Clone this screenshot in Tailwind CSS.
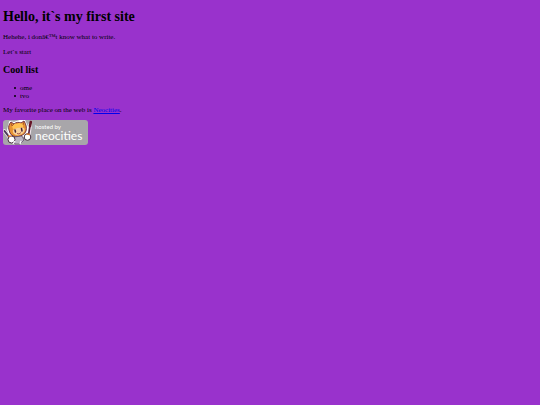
<!DOCTYPE html>
<html lang="en">
<head>
    <meta charset="UTF-8">
    <meta name="viewport" content="width=device-width, initial-scale=1.0">
    <title>My first site</title>
    <script src="https://cdn.jsdelivr.net/npm/@tailwindcss/browser@4"></script>
</head>

<body class="bg-[#9932cc] min-h-screen px-[3px] pt-[9px] text-black text-[7px] leading-[8px] font-['Liberation_Serif',serif]">
    <h1 class="text-[14px] leading-[15px] font-bold mb-[9px]">Hello, it`s my first site</h1>
    <p class="mb-[7px]">Hehehe, i donâ€™t know what to write.</p>
    <p class="mb-[8px]">Let`s start</p>

    <h2 class="text-[10px] leading-[12px] font-bold mb-[8px]">Cool list</h2>
    <ul class="pl-[11px] mb-[6px]">
        <li class="flex items-center gap-[4px] before:size-[2px] before:rounded-full before:bg-black">ome</li>
        <li class="flex items-center gap-[4px] before:size-[2px] before:rounded-full before:bg-black">tvo</li>
    </ul>

    <p class="mb-[6px]">My favorite place on the web is <a href="https://neocities.org" class="text-[#0000ee] underline">Neocities</a>.</p>

    <!-- Hosting badge -->
    <a href="https://neocities.org" aria-label="Hosted by Neocities" class="block w-[85px]">
        <svg class="block w-full" viewBox="0 0 85 25" xmlns="http://www.w3.org/2000/svg">
            <rect width="85" height="25" rx="3" fill="#a8a6aa"/>
            <!-- brush and pen -->
            <g stroke-linecap="round" fill="none">
                <path d="M25.5 15L27 5" stroke="#eee4ea" stroke-width="4"/>
                <path d="M25.5 15L27 6" stroke="#5c2340" stroke-width="1.6"/>
                <path d="M27 6L27.8 2" stroke="#651426" stroke-width="2.6"/>
                <path d="M1.5 11L7 18" stroke="#eee4ea" stroke-width="3.6"/>
                <path d="M1.5 11L7 18" stroke="#4a3858" stroke-width="2"/>
            </g>
            <!-- cat -->
            <path d="M5 10L7 2L11 3L17 1L21 0L24 7L24 12L21 16L13 18L7 15Z" fill="#fff" stroke="#fff" stroke-width="2" stroke-linejoin="round"/>
            <path d="M6 10C5 7 6 4 8 2L11 4C13 2 16 2 18 3L21 1C23 4 24 8 23 11C21 17 10 19 7 13Z" fill="#e89332" stroke="#743443" stroke-width="1"/>
            <path d="M9 6L12 3.5L14 4L16 3L20 4L20 7L10 9Z" fill="#ffc251"/>
            <path d="M8 3L9 6L11 4M21 2L20 5" stroke="#a14a2b" stroke-width=".8" fill="none"/>
            <path d="M10 10C12 8 17 7 21 8C23 11 20 14 16 15C12 16 9 13 10 10Z" fill="#f8d09a"/>
            <path d="M12 10L12.5 12M18.5 8.5L19 11" stroke="#402238" stroke-width="1.5" stroke-linecap="round"/>
            <path d="M14 13.5Q16 15 18 12.5" stroke="#9c443d" stroke-width=".9" fill="none"/>
            <path d="M11 17L19 16L21 20L17 24H12L10 20Z" fill="#bab3c1" stroke="#594660" stroke-width=".7"/>
            <!-- paws -->
            <circle cx="8.5" cy="19.5" r="3.5" fill="#fff" stroke="#463040" stroke-width="1"/>
            <circle cx="24.5" cy="17" r="3.3" fill="#fff" stroke="#463040" stroke-width="1"/>
            <path d="M5 16L8.5 16.4M23.5 14L27 14.5" stroke="#dc7b2f" stroke-width="1.4"/>
            <path d="M10 24L12 21M17 24L18 21" stroke="#fff" stroke-width="1.3"/>
            <!-- wordmark -->
            <text x="32" y="9" font-family="Lato, sans-serif" font-size="6" fill="#fff">hosted by</text>
            <text x="32" y="20" font-family="Lato, sans-serif" font-size="12" fill="#fff">neocities</text>
        </svg>
    </a>
</body>
</html>
